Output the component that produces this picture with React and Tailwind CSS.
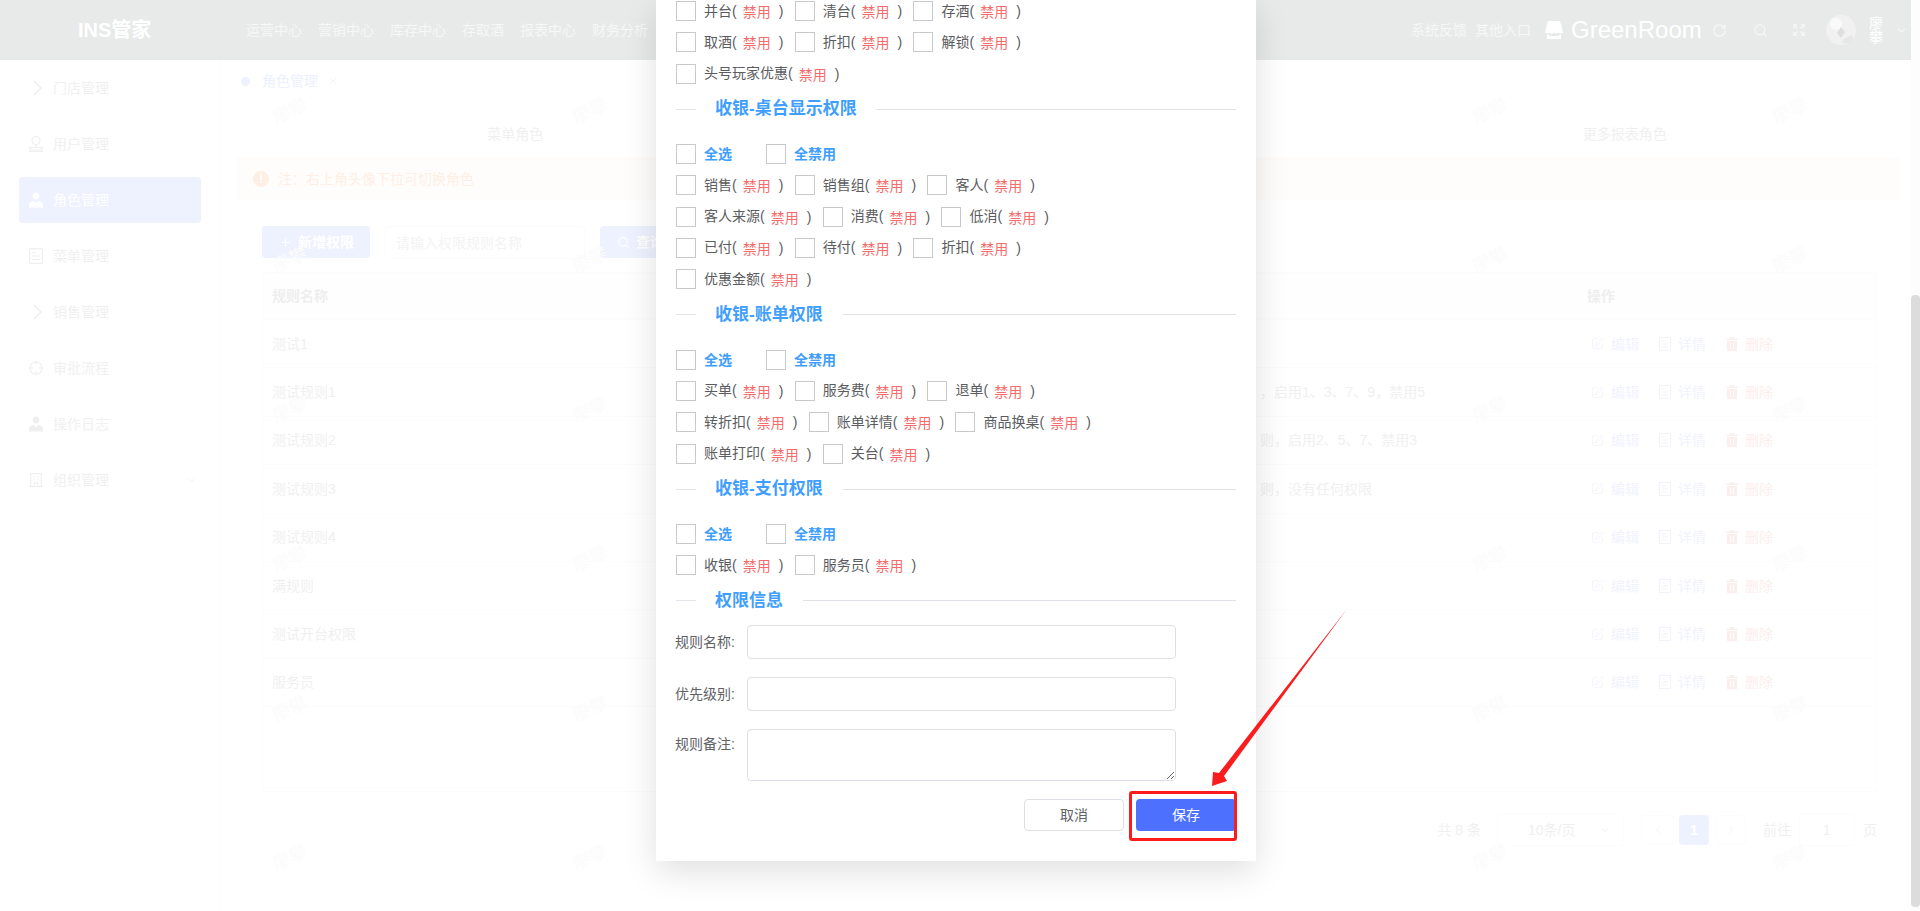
import React from "react";
import { ChevronDown, ChevronLeft, ChevronRight, Expand, Plus, RotateCw, Search, SquarePen, X } from "lucide-react";

const Person = ({ c }) => (
  <svg viewBox="0 0 14 16" className="w-[14px] h-4" fill={c}>
    <circle cx="7" cy="4" r="3.4" />
    <path d="M0 15.5V13c0-2 2-3.4 4.6-4.2L7 11l2.4-2.2C12 9.6 14 11 14 13v2.5z" />
  </svg>
);
const Stamp = () => (
  <svg viewBox="0 0 14 16" className="w-[14px] h-4" fill="none" stroke="#efefef" strokeWidth="1.2">
    <circle cx="7" cy="4.5" r="4" />
    <path d="M7 8.5V11M1 11.5h12V14H1zM0 15.5h14" />
  </svg>
);
const Doc = ({ c = "#efefef" }) => (
  <svg viewBox="0 0 14 16" className="w-[14px] h-4" fill="none" stroke={c} strokeWidth="1.2">
    <rect x="0.6" y="0.6" width="12.8" height="14.8" rx="1" />
    <path d="M3.5 4.5h3M3.5 8h7M3.5 11.5h7" />
  </svg>
);
const Cross = () => (
  <svg viewBox="0 0 16 16" className="w-4 h-4" fill="none" stroke="#efefef" strokeWidth="1.2">
    <circle cx="8" cy="8" r="7" />
    <path d="M8 1v3.5M8 11.5V15M1 8h3.5M11.5 8H15" />
  </svg>
);
const Building = () => (
  <svg viewBox="0 0 16 16" className="w-4 h-4" fill="none" stroke="#efefef" strokeWidth="1.2">
    <path d="M2 15.4V.7h12v14.7M0 15.4h16M6 15.4v-4h4v4M5 4h1.5M9.5 4H11M5 7.5h1.500M9.5 7.5H11" />
  </svg>
);
const Chev = () => (
  <svg viewBox="0 0 9 16" className="w-[9px] h-4 ml-[4px] mr-[1px]" fill="none" stroke="#eeeeee" strokeWidth="1.6">
    <path d="M1 1l7 7-7 7" />
  </svg>
);
const Trash = () => (
  <svg viewBox="0 0 12 14" className="w-3 h-[14px]" fill="#fdeeee">
    <path d="M4 0h4v1.5h4V3H0V1.5h4zM1 4h10v10H1zM4 6v6h1V6zm3 0v6h1V6z" />
  </svg>
);

const sideItems = [
  ["门店管理", <Chev />],
  ["用户管理", <Stamp />],
  ["角色管理", <Person c="#ffffff" />, true],
  ["菜单管理", <Doc />],
  ["销售管理", <Chev />],
  ["审批流程", <Cross />],
  ["操作日志", <Person c="#efefef" />],
  ["组织管理", <Building />],
];
const navItems = ["运营中心", "营销中心", "库存中心", "存取酒", "报表中心", "财务分析"];
const rows = [
  ["测试1", ""],
  ["测试规则1", "，启用1、3、7、9，禁用5"],
  ["测试规则2", "则，启用2、5、7、禁用3"],
  ["测试规则3", "则，没有任何权限"],
  ["测试规则4", ""],
  ["满规则", ""],
  ["测试开台权限", ""],
  ["服务员", ""],
];

const Perm = ({ name }) => (
  <div className="flex items-center mr-[11.4px]">
    <span className="w-5 h-5 border border-[#c8c9cc] bg-white" />
    <span className="ml-2 text-[#5a5c60] -mt-px">{name}(</span>
    <span className="ml-1.5 text-[#f56c6c] mt-[2px]">禁用</span>
    <span className="ml-2 text-[#5a5c60]">)</span>
  </div>
);
const PermRow = ({ names }) => (
  <div className="flex h-5">
    {names.map((n) => (
      <Perm key={n} name={n} />
    ))}
  </div>
);
const Rows = ({ list }) => (
  <div className="flex flex-col gap-[11.33px]">
    {list.map((r) => (
      <PermRow key={r.join()} names={r} />
    ))}
  </div>
);
const Title = ({ children }) => (
  <div className="flex items-center h-6 mt-[13.5px]">
    <span className="w-5 h-px bg-[#e4e4ea]" />
    <span className="ml-[19px] mr-5 text-[17px] font-bold text-[#409eff] whitespace-nowrap">{children}</span>
    <span className="flex-1 h-px bg-[#e0e0e8]" />
  </div>
);
const SelectAll = () => (
  <div className="flex h-5 mt-[22.8px] mb-[11.33px] items-center font-bold text-[#409eff]">
    <span className="w-5 h-5 border border-[#c8c9cc]" />
    <span className="ml-2 w-[28px] whitespace-nowrap">全选</span>
    <span className="w-5 h-5 border border-[#c8c9cc] ml-[34px]" />
    <span className="ml-2 whitespace-nowrap">全禁用</span>
  </div>
);
const Field = ({ label }) => (
  <div className="flex gap-[11px] items-center text-[#606266] whitespace-nowrap">
    <span className="w-[60px] ml-[-1px] mr-[1px]">{label}</span>
    <input className="w-[429px] h-[34px] border border-[#dcdfe6] rounded" />
  </div>
);

export default function App() {
  return (
    <div className="relative flex w-full h-[911px] overflow-hidden bg-white text-sm font-['Liberation_Sans','Noto_Sans_CJK_SC',sans-serif]">
      <div className="flex-1 min-w-0 flex flex-col">
        <header className="h-[60px] shrink-0 bg-[#e8eaea] flex items-center text-[#f6f7f7]">
          <div className="ml-[78px] w-[168px] text-xl font-bold text-white whitespace-nowrap">INS管家</div>
          <nav className="flex gap-4 whitespace-nowrap">
            {navItems.map((n) => (
              <span key={n}>{n}</span>
            ))}
          </nav>
          <div className="ml-auto flex items-center">
            <span className="whitespace-nowrap">系统反馈</span>
            <span className="ml-2 whitespace-nowrap">其他入口</span>
            <svg viewBox="0 0 18 18" className="w-[18px] h-[18px] ml-[14px]" fill="#ffffff">
              <path d="M3 0h12l3 11c-1 2-3 2-4.500 .5C12 13 10.500 13 9 11.500 7.500 13 6 13 4.500 11.500 3 13 1 13 0 11z" />
              <path d="M2 13.500c1 .5 2 .5 2.500 .2V15h9v-1.300c.5.3 1.500.3 2.500-.2V18H2z" />
            </svg>
            <span className="ml-2 text-2xl w-[131px] text-white">GreenRoom</span>
            <RotateCw size={15} color="#f6f7f7" className="ml-[10px]" />
            <Search size={15} color="#f6f7f7" className="ml-[26px]" />
            <Expand size={14} color="#f6f7f7" className="ml-[24px]" />
            <svg viewBox="0 0 30 30" className="w-[30px] h-[30px] ml-5 rounded-full">
              <rect width="30" height="30" fill="#f1f1f1" />
              <circle cx="10" cy="9" r="6" fill="#fafafa" />
              <path d="M15 12l4 5-4 6-4-5z" fill="#dedede" />
              <path d="M18 24l8-4 2 8H16z" fill="#e6e6e6" />
            </svg>
            <span className="ml-[13px] w-[14px] leading-[14px] text-[14px] text-white">廖攀</span>
            <ChevronDown size={13} color="#f6f7f7" className="ml-[12px] mr-[3px]" />
          </div>
        </header>
        <div className="flex-1 flex min-h-0">
          <aside className="w-[221px] shrink-0 border-r border-[#fcfcfc] pt-[5px] px-[19px] flex flex-col gap-[10px] text-[#f0f0f0]">
            {sideItems.map(([t, icon, active]) => (
              <div key={t} className={`h-[46px] shrink-0 w-[182px] flex items-center gap-[10px] pl-[10px] pr-[4px] rounded ${active ? "bg-[#eef1fe] text-white" : ""}`}>
                <span className="w-[14px] flex justify-center">{icon}</span>
                <span>{t}</span>
                {t === "组织管理" && <ChevronDown size={11} color="#efefef" className="ml-auto" />}
              </div>
            ))}
          </aside>
          <main className="flex-1 min-w-0 pl-4 pr-[10px] text-[#f0f0f0]">
            <div className="h-[42px] flex items-center pl-[4px] text-[#edf0fe]">
              <span className="w-[9px] h-[9px] rounded-full bg-[#eef1fe]" />
              <span className="ml-3">角色管理</span>
              <X size={10} color="#f0f0f2" className="ml-[10px]" />
            </div>
            <div className="h-[55px] w-[1664px] grid grid-cols-3 ml-px items-center text-center pt-[9px]">
              <span>菜单角色</span>
              <span />
              <span>更多报表角色</span>
            </div>
            <div className="h-[43px] bg-[#fffdfb] flex items-center pl-[16px] text-[#ffeee4]">
              <span className="w-4 h-4 rounded-full bg-[#ffeee4] text-white text-xs font-bold flex items-center justify-center">!</span>
              <span className="ml-[9px]">注：右上角头像下拉可切换角色</span>
            </div>
            <div className="mt-[26px] ml-[25px] flex gap-[15px] h-[33px]">
              <div className="w-[108px] h-8 rounded-sm bg-[#eef1fe] flex items-center pl-[17px] gap-[6px] text-white font-bold">
                <Plus size={13} color="#ffffff" />
                <span>新增权限</span>
              </div>
              <div className="w-[200px] border border-[#fbfbfb] rounded flex items-center pl-[10px] text-[#f3f3f3]">请输入权限规则名称</div>
              <div className="w-[108px] h-8 rounded-sm bg-[#eef1fe] flex items-center pl-[17px] gap-[6px] text-white font-bold">
                <Search size={13} color="#ffffff" />
                <span>查询</span>
              </div>
            </div>
            <div className="mt-[13px] ml-[25px] w-[1615px] h-[520px] border border-[#fcfcfc]">
              <div className="h-[47px] flex items-center border-b border-[#fcfcfc] bg-[#fefefe] font-bold text-[#eeeeee]">
                <span className="w-[1314px] pl-[9px]">规则名称</span>
                <span className="pl-[10px]">操作</span>
              </div>
              {rows.map(([name, desc]) => (
                <div key={name} className="h-[48.4px] flex items-center border-b border-[#fcfcfc]">
                  <span className="w-[997px] pl-[9px]">{name}</span>
                  <span className="flex-1 whitespace-nowrap text-[#f0f0f0]">{desc}</span>
                  <span className="w-[299px] pl-[14px] flex gap-5">
                    <span className="flex items-center gap-[7px] text-[#f1f2fe]">
                      <SquarePen size={13} strokeWidth={1.5} color="#f1f2fe" />
                      编辑
                    </span>
                    <span className="flex items-center gap-[7px] text-[#f1f2fe]">
                      <span className="w-3 flex"><svg viewBox="0 0 12 14" className="w-3 h-[14px]" fill="none" stroke="#f1f2fe" strokeWidth="1"><rect x=".5" y=".5" width="11" height="13" /><path d="M3 4h3M3 7h6M3 10h6" /></svg></span>
                      详情
                    </span>
                    <span className="flex items-center gap-[7px] text-[#fdeeee]">
                      <Trash />
                      删除
                    </span>
                  </span>
                </div>
              ))}
            </div>
            <div className="mt-[21px] w-[1640px] flex items-center justify-end h-[33px] whitespace-nowrap">
              <span className="mr-[16px]">共 8 条</span>
              <div className="w-[127px] h-[33px] border border-[#fcfcfc] rounded flex items-center pl-[30px] pr-3 justify-between">
                <span>10条/页</span>
                <ChevronDown size={12} color="#f3f3f3" />
              </div>
              <span className="ml-[17px] w-[33px] h-[30px] border border-[#fcfcfc] rounded flex items-center justify-center"><ChevronLeft size={12} color="#f3f3f3" /></span>
              <span className="ml-[5px] w-[30px] h-[30px] rounded bg-[#eef1fe] text-white font-bold flex items-center justify-center">1</span>
              <span className="ml-[7px] w-[30px] h-[30px] border border-[#fcfcfc] rounded flex items-center justify-center"><ChevronRight size={12} color="#f3f3f3" /></span>
              <span className="ml-[17px]">前往</span>
              <span className="ml-2 w-[56px] h-[33px] border border-[#fcfcfc] rounded flex items-center justify-center">1</span>
              <span className="ml-2">页</span>
            </div>
          </main>
        </div>
      </div>
      <div className="w-[9px] shrink-0 bg-[#fdfdfd] pt-[295px] pb-1 flex">
        <div className="w-full bg-[#dcdcdc] rounded" />
      </div>

      <div className="absolute left-[140px] top-[36px] grid grid-cols-[repeat(6,300px)] grid-rows-[repeat(6,149.5px)] place-items-center pointer-events-none text-[#fbfbfb] text-lg">
        {Array.from({ length: 36 }).map((_, i) => (
          <span key={i} className="-rotate-[25deg]">{i % 6 === 2 || i % 6 === 3 ? "" : "廖攀"}</span>
        ))}
      </div>

      <div className="absolute left-[656px] top-0 w-[600px] h-[861px] bg-white shadow-[0_10px_32px_rgba(0,0,0,0.13)] px-5 pt-px">
        <Rows list={[["并台", "清台", "存酒"], ["取酒", "折扣", "解锁"], ["头号玩家优惠"]]} />
        <Title>收银-桌台显示权限</Title>
        <SelectAll />
        <Rows list={[["销售", "销售组", "客人"], ["客人来源", "消费", "低消"], ["已付", "待付", "折扣"], ["优惠金额"]]} />
        <Title>收银-账单权限</Title>
        <SelectAll />
        <Rows list={[["买单", "服务费", "退单"], ["转折扣", "账单详情", "商品换桌"], ["账单打印", "关台"]]} />
        <Title>收银-支付权限</Title>
        <SelectAll />
        <Rows list={[["收银", "服务员"]]} />
        <Title>权限信息</Title>
        <div className="mt-[12px] flex flex-col gap-[18px]">
          <Field label="规则名称:" />
          <Field label="优先级别:" />
          <div className="flex gap-[11px] text-[#606266] whitespace-nowrap">
            <span className="w-[60px] ml-[-1px] mr-[1px] mt-[5px]">规则备注:</span>
            <textarea className="w-[429px] h-[52px] border border-[#dcdfe6] rounded" />
          </div>
        </div>
        <div className="mt-[18px] flex justify-end gap-3">
          <button className="w-[100px] h-8 border border-[#dcdfe6] rounded-sm text-[#606266]">取消</button>
          <button className="w-[100px] h-8 bg-[#4d70ff] rounded-sm text-white">保存</button>
        </div>
      </div>

      <div className="absolute left-[1129px] top-[791px] w-[108px] h-[50px] border-[3px] border-[#fb1d1d] rounded-[3px] pointer-events-none" />
      <svg className="absolute left-[1200px] top-[600px] pointer-events-none" width="160" height="200" viewBox="1200 600 160 200">
        <polygon points="1347,609 1224,776 1227,781 1212,786 1213,772 1219,773" fill="#fb1d1d" />
      </svg>
    </div>
  );
}
